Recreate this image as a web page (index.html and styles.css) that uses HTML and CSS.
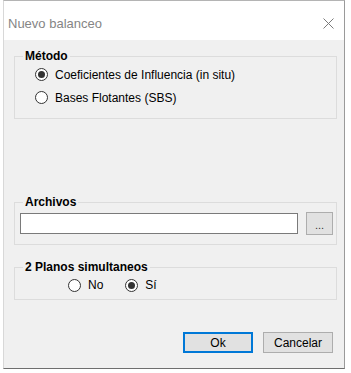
FILE: index.html
```html
<!DOCTYPE html>
<html lang="es">
<head>
    <meta charset="UTF-8">
    <title>Nuevo balanceo</title>
    <link rel="stylesheet" href="styles.css">
</head>
<body>
    <div class="window">
        <div class="titlebar">
            <span class="title">Nuevo balanceo</span>
            <svg class="close" width="11" height="11" viewBox="0 0 11 11">
                <path d="M0.5 0.5 L10.5 10.5 M10.5 0.5 L0.5 10.5" stroke="#7a7a7a" stroke-width="1" fill="none"/>
            </svg>
        </div>

        <div class="client">
            <fieldset class="group">
                <legend>Método</legend>
                <div class="group-body metodo-body">
                    <div class="radio-row">
                        <span class="radio checked"></span>
                        <span>Coeficientes de Influencia (in situ)</span>
                    </div>
                    <div class="radio-row">
                        <span class="radio"></span>
                        <span>Bases Flotantes (SBS)</span>
                    </div>
                </div>
            </fieldset>

            <fieldset class="group group-archivos">
                <legend>Archivos</legend>
                <div class="group-body file-row">
                    <div class="textbox"></div>
                    <button class="btn btn-browse">...</button>
                </div>
            </fieldset>

            <fieldset class="group group-planos">
                <legend>2 Planos simultaneos</legend>
                <div class="group-body inline-radios">
                    <div class="radio-row small">
                        <span class="radio"></span>
                        <span>No</span>
                    </div>
                    <div class="radio-row small">
                        <span class="radio checked"></span>
                        <span>Sí</span>
                    </div>
                </div>
            </fieldset>

            <div class="actions">
                <button class="btn btn-default">Ok</button>
                <button class="btn">Cancelar</button>
            </div>
        </div>
    </div>
</body>
</html>
```

FILE: styles.css
```css
body {
    margin: 0;
    background: #ffffff;
    font-family: 'Liberation Sans', Arial, sans-serif;
    font-size: 12px;
    color: #000;
}

.window {
    width: 340px;
    margin-left: 3px;
    border-top: 1px solid #b4b4b4;
    border-left: 1px solid #d8d8d8;
    border-right: 1px solid #9a9a9a;
    border-bottom: 1px solid #6e6e6e;
}

.titlebar {
    height: 39px;
    background: #ffffff;
    display: flex;
    align-items: center;
    justify-content: space-between;
    padding: 0 10px 0 4px;
}

.title {
    font-size: 13px;
    color: #858585;
    margin-top: 5px;
}

.close {
    display: block;
    margin-top: 5px;
}

.client {
    background: #f0f0f0;
    padding: 9px 11px 15px 10px;
    height: 304px;
}

/* group boxes */
.group {
    width: 323px;
    margin: 0;
    padding: 0;
    border: 1px solid #dcdcdc;
    box-sizing: border-box;
}

.group legend {
    margin-left: 8px;
    padding: 0 2px;
    font-weight: bold;
    line-height: 14px;
    height: 14px;
}

.metodo-body {
    padding: 0 0 9px 20px;
}

.radio-row {
    display: flex;
    align-items: center;
    height: 23px;
    gap: 7px;
}

.radio {
    width: 11px;
    height: 11px;
    border: 1px solid #333;
    border-radius: 50%;
    background: #fff;
    position: relative;
}

.radio.checked::after {
    content: '';
    position: absolute;
    left: 2px;
    top: 2px;
    width: 7px;
    height: 7px;
    border-radius: 50%;
    background: #333;
}

.group-archivos {
    margin-top: 76px;
}

.file-row {
    display: flex;
    align-items: center;
    gap: 8px;
    padding: 3px 3px 9px 5px;
}

.textbox {
    width: 276px;
    height: 19px;
    background: #fff;
    border: 1px solid #7a7a7a;
}

.btn {
    font-family: 'Liberation Sans', Arial, sans-serif;
    font-size: 12px;
    color: #000;
    background: #e1e1e1;
    border: 1px solid #adadad;
    padding: 0;
    box-sizing: border-box;
}

.btn-browse {
    width: 27px;
    height: 23px;
    color: #333;
    font-size: 11px;
    padding-top: 3px;
}

.group-planos {
    margin-top: 15px;
}

.inline-radios {
    display: flex;
    gap: 22px;
    padding: 1px 0 4px 53px;
}

.radio-row.small {
    height: 20px;
    gap: 7px;
}

.actions {
    display: flex;
    justify-content: flex-end;
    gap: 10px;
    margin-top: 32px;
}

.actions .btn {
    width: 70px;
    height: 21px;
}

.btn-default {
    border: 2px solid #0078d7;
}
```
